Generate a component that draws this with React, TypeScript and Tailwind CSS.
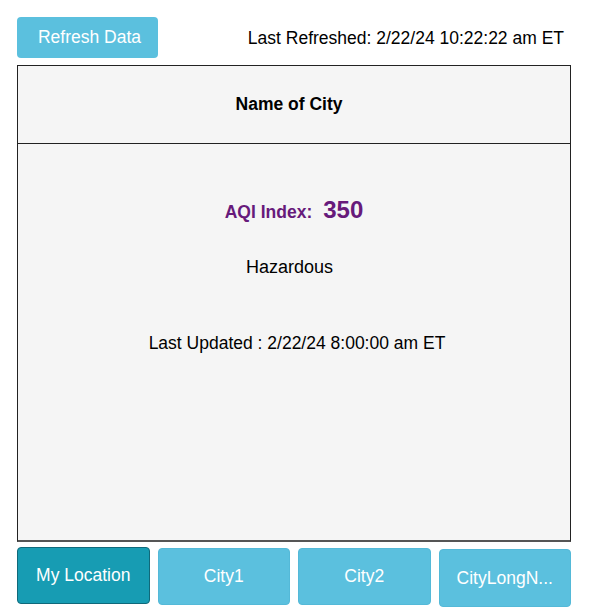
import React from "react";

export default function App() {
  const font = { fontFamily: '"Liberation Sans", Arial, sans-serif' };
  return (
    <div className="w-[596px] h-[616px] bg-white text-black" style={font}>
      <div className="pl-[17px] pt-[17px] w-[571px]">
        <div className="flex items-center justify-between h-[41px]">
          <button className="h-[41px] w-[141px] pl-[4px] rounded-[4px] bg-[#5bc0de] text-white text-[17.5px]">
            Refresh Data
          </button>
          <div className="text-[17.5px] pr-[7px] pt-[1px]">Last Refreshed: 2/22/24 10:22:22 am ET</div>
        </div>
        <div className="mt-[7px] border border-[#222] border-b-2 border-b-[#555] bg-[#f5f5f5] h-[477px] flex flex-col">
          <div className="h-[78px] pr-[10px] border-b border-[#222] flex items-center justify-center font-bold text-[17.5px]">
            Name of City
          </div>
          <div className="flex flex-col items-center">
            <div className="mt-[48px] flex items-baseline text-[#671a7b] font-bold">
              <span className="text-[17.5px]">AQI Index:</span>
              <span className="text-[24px] ml-[11px]">350</span>
            </div>
            <div className="mt-[26px] mr-[9px] text-[18px]">Hazardous</div>
            <div className="mt-[49px] ml-[6px] text-[17.5px]">Last Updated : 2/22/24 8:00:00 am ET</div>
          </div>
        </div>
        <div className="mt-[5px] flex gap-[8px] items-start">
          <button className="flex-1 h-[57px] rounded-[4px] bg-[#179cb3] border border-[#10697a] text-white text-[17.5px]">
            My Location
          </button>
          <button className="flex-1 mt-[1px] h-[57px] rounded-[4px] bg-[#5bc0de] border border-[#54b9d8] text-white text-[17.5px]">
            City1
          </button>
          <button className="flex-1 mt-[1px] h-[57px] rounded-[4px] bg-[#5bc0de] border border-[#54b9d8] text-white text-[17.5px]">
            City2
          </button>
          <button className="flex-1 mt-[2px] h-[58px] rounded-[4px] bg-[#5bc0de] border border-[#54b9d8] text-white text-[17.5px]">
            CityLongN...
          </button>
        </div>
      </div>
    </div>
  );
}
